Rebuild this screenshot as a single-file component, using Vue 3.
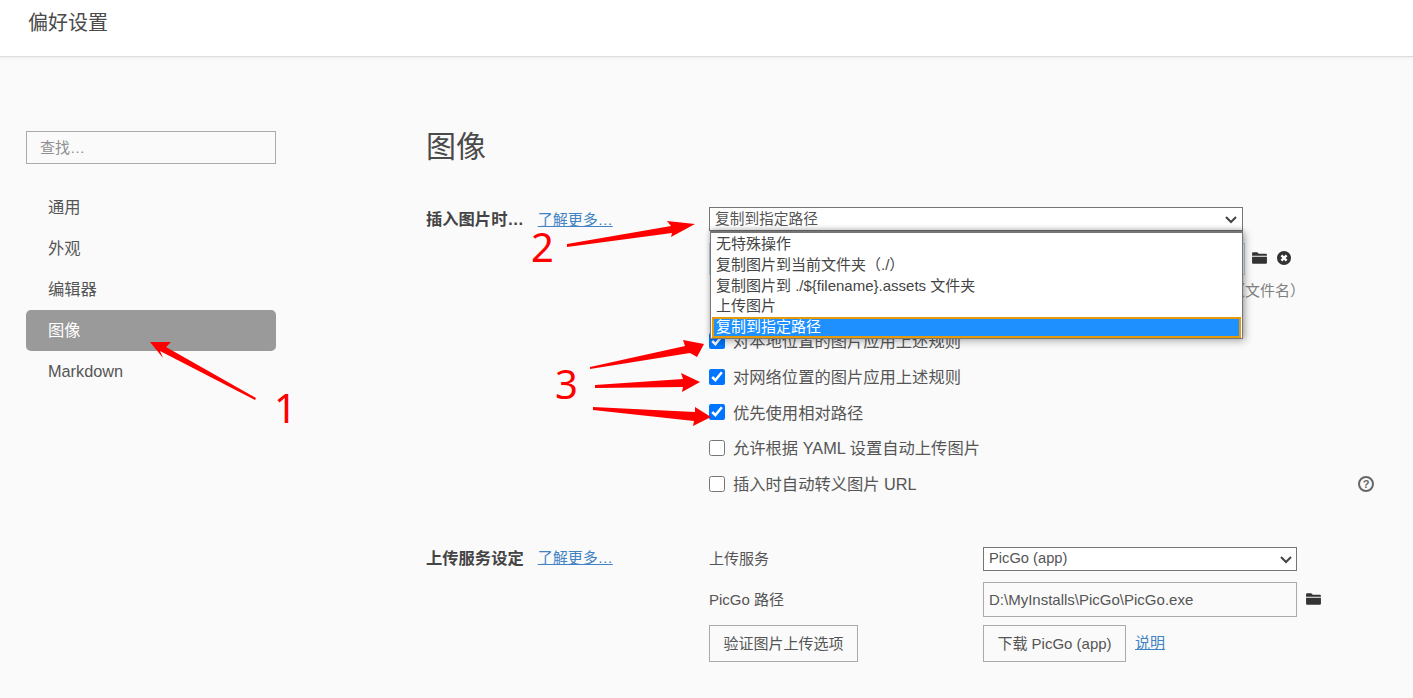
<script setup>
const nav = ['通用', '外观', '编辑器', '图像', 'Markdown']
const options = ['无特殊操作', '复制图片到当前文件夹（./）', '复制图片到 ./${filename}.assets 文件夹', '上传图片', '复制到指定路径']
const checks = [
  { text: '对本地位置的图片应用上述规则', on: true },
  { text: '对网络位置的图片应用上述规则', on: true },
  { text: '优先使用相对路径', on: true },
  { text: '允许根据 YAML 设置自动上传图片', on: false },
  { text: '插入时自动转义图片 URL', on: false, help: true }
]
const arrows = [
  '150,342 171,342 166,347 256,398 255,400 160,351 163,358',
  '695,224 667,221 671,226 567,244 567,247 672,233 671,237',
  '704,344 683,340 685,346 590,367 590,369 690,353 697,357',
  '700,382 681,373 683,379 595,385 595,388 683,387 682,392',
  '711,417 695,407 695,412 593,407 593,410 694,421 693,426'
]
const folder = 'M1 3.2C1 2.5 1.5 2 2.2 2h3.6l1.6 1.6h6.4c.7 0 1.2.5 1.2 1.2v.6H1zM1 6.4h14v5.4c0 .7-.5 1.2-1.2 1.2H2.2C1.5 13 1 12.5 1 11.8z'
</script>

<template>
  <div class="page">
    <header class="topbar">偏好设置</header>
    <div class="body">
      <aside class="side">
        <input class="search" placeholder="查找…" />
        <nav class="nav">
          <div v-for="n in nav" :key="n" class="nav-item" :class="{ active: n === '图像' }">{{ n }}</div>
        </nav>
      </aside>
      <main class="main">
        <h1 class="title">图像</h1>
        <section class="section">
          <div class="head">
            <span class="label">插入图片时…</span>
            <a class="link">了解更多…</a>
          </div>
          <div>
            <div class="select-wrap">
              <select class="select top"><option>复制到指定路径</option></select>
              <svg class="chev" viewBox="0 0 12 7"><path d="M1 1l5 5 5-5" /></svg>
              <div class="dropdown">
                <div v-for="o in options" :key="o" class="opt" :class="{ sel: o === '复制到指定路径' }">{{ o }}</div>
              </div>
            </div>
            <div class="path-row">
              <input class="path-input" value="./images" />
              <svg class="icon" viewBox="0 0 16 16"><path :d="folder" /></svg>
              <svg class="icon close" viewBox="0 0 16 16"><circle cx="8" cy="8" r="7" /><path d="M5.4 5.4l5.2 5.2M10.6 5.4l-5.2 5.2" /></svg>
            </div>
            <div class="hint">（文件名）</div>
            <div class="checks">
              <label v-for="c in checks" :key="c.text" class="check">
                <input type="checkbox" :checked="c.on" />
                <span class="check-text">{{ c.text }}</span>
                <span v-if="c.help" class="help">?</span>
              </label>
            </div>
          </div>
        </section>
        <section class="section second">
          <div class="head">
            <span class="label">上传服务设定</span>
            <a class="link">了解更多…</a>
          </div>
          <div class="grid">
            <span class="field first">上传服务</span>
            <div class="pic-wrap">
              <select class="select pic"><option>PicGo (app)</option></select>
              <svg class="chev pic-chev" viewBox="0 0 12 7"><path d="M1 1l5 5 5-5" /></svg>
            </div>
            <span class="field">PicGo 路径</span>
            <div class="cell-row">
              <input class="pic-input" value="D:\MyInstalls\PicGo\PicGo.exe" />
              <svg class="icon after" viewBox="0 0 16 16"><path :d="folder" /></svg>
            </div>
            <div><button class="btn verify">验证图片上传选项</button></div>
            <div class="cell-row">
              <button class="btn download">下载 PicGo (app)</button>
              <a class="link small">说明</a>
            </div>
          </div>
        </section>
      </main>
    </div>
    <svg class="marks" viewBox="0 0 1413 698">
      <polygon v-for="a in arrows" :key="a" :points="a" />
      <text x="274" y="423">1</text>
      <text x="531" y="262">2</text>
      <text x="555" y="399">3</text>
    </svg>
  </div>
</template>

<style scoped>
.page {
  position: relative;
  width: 1413px;
  height: 698px;
  overflow: hidden;
  background: #fafafa;
  color: #555;
  font-family: "Liberation Sans", "Noto Sans CJK SC", sans-serif;
  font-size: 16.3px;
}
.topbar {
  box-sizing: border-box;
  height: 57px;
  padding: 9px 0 0 28px;
  font-size: 20px;
  line-height: 28px;
  color: #4a4a4a;
  background: #fff;
  border-bottom: 1px solid #dcdcdc;
  box-shadow: 0 1px 3px rgba(0, 0, 0, .06);
}
.body { display: flex; }
.side { width: 250px; margin-left: 26px; padding-top: 74px; }
.search {
  box-sizing: border-box;
  display: block;
  width: 250px;
  height: 33px;
  padding: 0 13px;
  font: inherit;
  font-size: 15px;
  background: #fafafa;
  border: 1px solid #aaa;
  border-radius: 0;
  outline: none;
}
.search::placeholder { color: #8f8f8f; }
.nav { margin-top: 23px; }
.nav-item {
  height: 41px;
  padding-left: 22px;
  line-height: 41px;
  color: #555;
  border-radius: 5px;
}
.nav-item.active { color: #fff; background: #9a9a9a; }
.main { width: 949px; margin-left: 150px; }
.title {
  height: 150px;
  margin: 0;
  padding-top: 68px;
  box-sizing: border-box;
  font-size: 30px;
  font-weight: 400;
  line-height: 44px;
  color: #4a4a4a;
}
.section { display: grid; grid-template-columns: 283px 1fr; }
.second { margin-top: 45px; }
.head { display: flex; align-items: center; height: 24px; padding-bottom: 2px; box-sizing: border-box; gap: 14px; }
.second .head { padding-bottom: 4px; }
.label { font-weight: 700; font-size: 16.3px; color: #444; }
.link { font-size: 15px; color: #4183c4; text-decoration: underline; }
.small { margin: 0 0 3px 9px; }
.select-wrap { position: relative; width: 534px; height: 24px; }
.select {
  box-sizing: border-box;
  appearance: none;
  font: inherit;
  font-size: 14.7px;
  color: #555;
  background: #fff;
  border: 1px solid #767676;
  border-radius: 0;
  padding: 0 0 2px 5px;
  outline: none;
}
.top { display: block; width: 534px; height: 24px; padding-bottom: 0; }
.chev {
  position: absolute;
  top: 9px;
  right: 6px;
  width: 12px;
  height: 7px;
  overflow: visible;
  pointer-events: none;
}
.chev path { fill: none; stroke: #444; stroke-width: 2; }
.dropdown {
  position: absolute;
  top: 24px;
  left: 1px;
  box-sizing: border-box;
  width: 533px;
  height: 108px;
  padding: 1px;
  background: #fff;
  border: 1px solid #767676;
  border-top-width: 2px;
  box-shadow: 2px 2px 8px rgba(0, 0, 0, .3), 0 -2px 5px rgba(0, 0, 0, .18);
}
.opt {
  height: 20.8px;
  padding-left: 4px;
  box-sizing: border-box;
  font-size: 15px;
  line-height: 19px;
  white-space: nowrap;
  color: #444;
}
.opt.sel {
  color: #fff;
  background: #1e90ff;
  outline: 2px solid #e59a0c;
  outline-offset: -2px;
}
.path-row { display: flex; align-items: center; height: 32px; margin-top: 12px; }
.path-input {
  box-sizing: border-box;
  width: 536px;
  height: 32px;
  padding: 0 6px;
  font: inherit;
  font-size: 14px;
  border: 1px solid #bcd3ea;
  background: #fff;
}
.icon { display: block; width: 17px; height: 17px; margin-left: 6px; fill: #333; flex: none; }
.path-row .icon { margin-bottom: 2px; }
.close { width: 16px; height: 16px; margin-left: 8px; }
.close path { fill: none; stroke: #fff; stroke-width: 2.4; }
.after { margin-left: 8px; }
.hint {
  width: 596px;
  height: 20px;
  margin-top: 6px;
  font-size: 15px;
  line-height: 20px;
  text-align: right;
  color: #808080;
}
.checks { margin-top: 22px; }
.check { display: flex; align-items: center; height: 35.75px; color: #555; }
.check input { width: 16px; height: 16px; margin: 0 8px 0 0; accent-color: #0075ff; flex: none; }
.check-text { padding-bottom: 1.5px; }
.help {
  box-sizing: border-box;
  width: 16px;
  height: 16px;
  margin-left: auto;
  margin-right: 1px;
  border: 2px solid #666;
  border-radius: 50%;
  font-size: 11px;
  font-weight: 700;
  line-height: 12px;
  text-align: center;
  color: #666;
}
.grid {
  display: grid;
  grid-template-columns: 274px 1fr;
  grid-template-rows: 27px 35px 37px;
  row-gap: 8px;
  align-items: center;
  font-size: 15px;
}
.field { padding-bottom: 2px; color: #555; }
.field.first { align-self: start; line-height: 24px; padding-bottom: 0; }
.pic-wrap { position: relative; width: 314px; height: 24px; align-self: start; }
.pic { display: block; width: 314px; height: 24px; }
.pic-chev { right: 5px; }
.cell-row { display: flex; align-items: center; }
.pic-input {
  box-sizing: border-box;
  width: 314px;
  height: 35px;
  padding: 0 5px;
  font: inherit;
  font-size: 15px;
  color: #555;
  background: #fafafa;
  border: 1px solid #aaa;
  outline: none;
}
.btn {
  box-sizing: border-box;
  height: 37px;
  padding: 0 0 2px;
  font: inherit;
  font-size: 15px;
  color: #555;
  background: #fafafa;
  border: 1px solid #aaa;
  border-radius: 0;
}
.verify { width: 149px; }
.download { width: 143px; }
.marks { position: absolute; inset: 0; width: 1413px; height: 698px; pointer-events: none; }
.marks polygon { fill: #ff0000; }
.marks text { font-family: "Noto Sans", sans-serif; font-size: 40px; fill: #ff0000; }
</style>

<style>
html, body { margin: 0; background: #fafafa; }
</style>
